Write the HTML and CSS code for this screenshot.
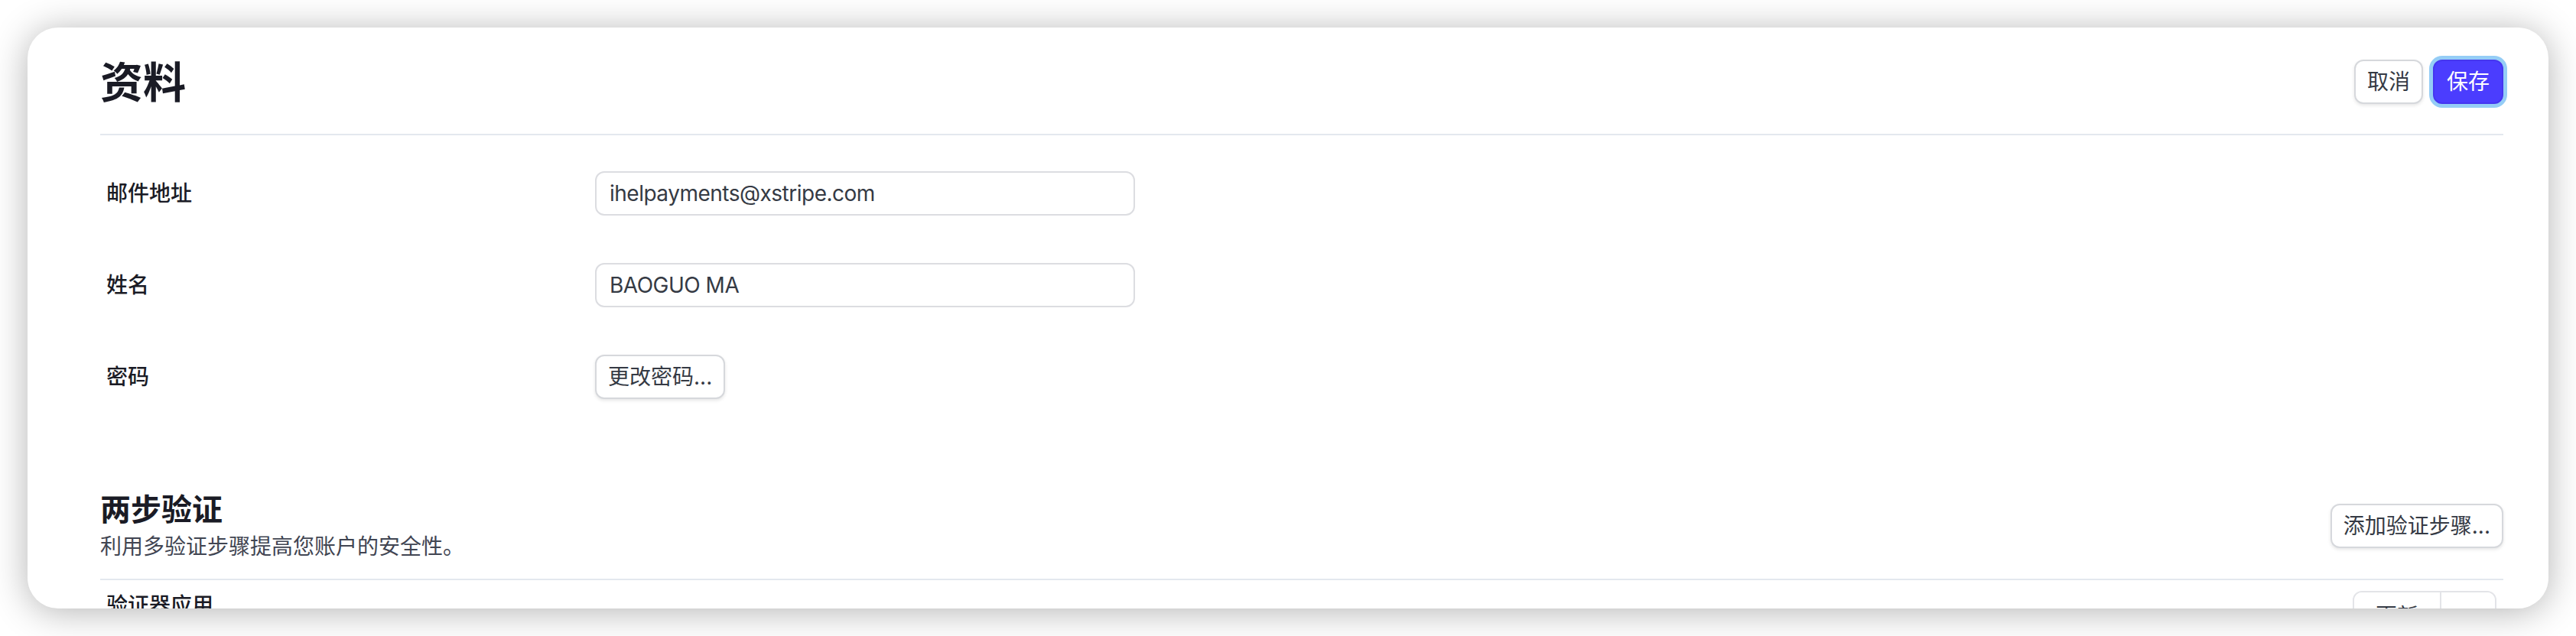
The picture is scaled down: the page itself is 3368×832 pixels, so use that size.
FILE: index.html
```html
<!DOCTYPE html>
<html lang="zh-CN">
<head>
  <meta charset="UTF-8">
  <meta name="viewport" content="width=device-width, initial-scale=1.0">
  <title>资料</title>
  <link rel="stylesheet" href="styles.css">
</head>
<body>
  <div class="window">
    <header class="page-head">
      <h1>资料</h1>
      <div class="actions">
        <button class="btn">取消</button>
        <button class="btn primary">保存</button>
      </div>
    </header>

    <div class="form">
      <div class="row">
        <label class="label" for="email">邮件地址</label>
        <input class="field" id="email" type="text" value="ihelpayments@xstripe.com">
      </div>
      <div class="row">
        <label class="label" for="name">姓名</label>
        <input class="field" id="name" type="text" value="BAOGUO MA">
      </div>
      <div class="row">
        <span class="label">密码</span>
        <div><button class="btn">更改密码...</button></div>
      </div>
    </div>

    <section class="section">
      <div class="section-head">
        <div>
          <h2>两步验证</h2>
          <p class="hint">利用多验证步骤提高您账户的安全性。</p>
        </div>
        <button class="btn">添加验证步骤...</button>
      </div>
      <div class="method">
        <span class="label">验证器应用</span>
        <div class="btn-group">
          <button class="seg">更新</button>
          <button class="seg seg-icon" aria-label="更多">
            <svg width="26" height="26" viewBox="0 0 16 16"><circle cx="3" cy="8" r="1.5" fill="#353a44"/><circle cx="8" cy="8" r="1.5" fill="#353a44"/><circle cx="13" cy="8" r="1.5" fill="#353a44"/></svg>
          </button>
        </div>
      </div>
    </section>
  </div>
</body>
</html>
```

FILE: styles.css
```css
* {
  margin: 0;
  padding: 0;
  box-sizing: border-box;
}
html, body {
  height: 100%;
  background-color: #ffffff;
  font-family: Inter, "Noto Sans CJK SC", sans-serif;
  color: #1a1b25;
}
body {
  padding: 36px;
  overflow: hidden;
}
.window {
  height: 760px;
  background-color: #ffffff;
  border-radius: 40px;
  box-shadow: 0 4px 48px rgba(0,0,0,0.3);
  padding: 40px 59px 0 95px;
  overflow: hidden;
}
.page-head {
  display: flex;
  justify-content: space-between;
  align-items: center;
  padding-bottom: 35px;
  border-bottom: 2px solid #e3e8ee;
}
h1 {
  font-size: 56px;
  line-height: 64px;
  font-weight: 700;
}
.actions {
  display: flex;
  gap: 13px;
  margin-top: -3px;
}
.btn {
  font-family: Inter, "Noto Sans CJK SC", sans-serif;
  font-size: 28px;
  line-height: 36px;
  height: 58px;
  padding: 0 15px;
  color: #353a44;
  background-color: #ffffff;
  border: 2px solid #d6d8dc;
  border-radius: 12px;
  box-shadow: 0 2px 4px rgba(0,0,0,0.1);
  cursor: pointer;
}
.primary {
  color: #ffffff;
  background-color: #4b3dfe;
  border-color: #4536f0;
  box-shadow: 0 0 0 5px #95cdf6;
  width: 92px;
}
.form {
  padding-top: 16px;
}
.row {
  display: grid;
  grid-template-columns: 647px 1fr;
  align-items: center;
  height: 120px;
}
.label {
  padding-left: 8px;
  font-size: 28px;
  line-height: 36px;
  font-weight: 500;
  color: #1a1b25;
}
.field {
  width: 706px;
  height: 58px;
  padding: 0 17px;
  font-family: Inter, "Noto Sans CJK SC", sans-serif;
  font-size: 28px;
  letter-spacing: -0.5px;
  color: #353a44;
  border: 2px solid #dcdde1;
  border-radius: 12px;
  outline: none;
}
.section {
  margin-top: 90px;
}
.section-head {
  display: flex;
  justify-content: space-between;
  align-items: center;
  padding-bottom: 24px;
  border-bottom: 2px solid #e3e8ee;
}
h2 {
  font-size: 40px;
  line-height: 48px;
  font-weight: 700;
  margin-bottom: 6px;
}
.hint {
  font-size: 28px;
  line-height: 36px;
  color: #414552;
}
.method {
  display: flex;
  justify-content: space-between;
  align-items: flex-start;
  padding: 14px 9px 0 0;
}
.method .label {
  padding-top: 1px;
}
.btn-group {
  display: flex;
  border: 2px solid #e3e4e8;
  border-radius: 12px;
  overflow: hidden;
}
.seg {
  height: 58px;
  font-family: Inter, "Noto Sans CJK SC", sans-serif;
  font-size: 28px;
  color: #353a44;
  background-color: #ffffff;
  border: none;
  padding: 0 28px;
}
.seg-icon {
  width: 72px;
  padding: 0;
  border-left: 2px solid #e3e4e8;
  display: flex;
  align-items: center;
  justify-content: center;
}
```
